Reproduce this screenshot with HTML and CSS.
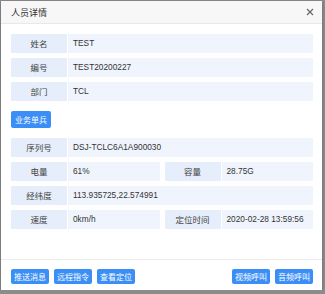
FILE: index.html
```html
<!DOCTYPE html>
<html>
<head>
  <title>人员详情</title>
  <link rel="stylesheet" href="styles.css">
</head>
<body>
  <div class="dialog">
    <div class="dialog-header">
      <span class="title">人员详情</span>
      <svg class="close" width="8" height="8" viewBox="0 0 8 8"><path d="M1 1L7 7M7 1L1 7" stroke="#666" stroke-width="1.2"/></svg>
    </div>

    <div class="dialog-body">
      <div class="row"><div class="label">姓名</div><div class="value">TEST</div></div>
      <div class="row"><div class="label">编号</div><div class="value">TEST20200227</div></div>
      <div class="row"><div class="label">部门</div><div class="value">TCL</div></div>

      <button class="btn btn-single">业务单兵</button>

      <div class="row"><div class="label">序列号</div><div class="value">DSJ-TCLC6A1A900030</div></div>
      <div class="split">
        <div class="row"><div class="label">电量</div><div class="value">61%</div></div>
        <div class="row"><div class="label">容量</div><div class="value">28.75G</div></div>
      </div>
      <div class="row"><div class="label">经纬度</div><div class="value">113.935725,22.574991</div></div>
      <div class="split">
        <div class="row"><div class="label">速度</div><div class="value">0km/h</div></div>
        <div class="row"><div class="label">定位时间</div><div class="value">2020-02-28 13:59:56</div></div>
      </div>
    </div>

    <div class="dialog-footer">
      <div class="group">
        <button class="btn">推送消息</button>
        <button class="btn">远程指令</button>
        <button class="btn">查看定位</button>
      </div>
      <div class="group">
        <button class="btn">视频呼叫</button>
        <button class="btn">音频呼叫</button>
      </div>
    </div>
  </div>
</body>
</html>
```

FILE: styles.css
```css
body { margin: 0; background: #8c8c8c; font-family: "Noto Sans CJK SC", "Liberation Sans", sans-serif; font-size: 10px; color: #333; }
.dialog { margin: 1px 0 0 1px; width: 321px; height: 289px; background: #fff; display: flex; flex-direction: column; box-shadow: 0 1px 3px rgba(0,0,0,0.3); }
.dialog-header { height: 22px; background: #f7f7f7; border-bottom: 1px solid #e8e8e8; display: flex; align-items: center; justify-content: space-between; padding: 0 8px 0 10px; }
.title { font-size: 9px; color: #333; }
.close { display: block; }
.dialog-body { flex: 1; padding: 10px 9px 0 10px; }
.row { display: flex; gap: 1px; height: 19px; margin-bottom: 5px; line-height: 19px; }
.label { width: 56px; flex: none; background: #e6eefb; text-align: center; font-size: 8.5px; color: #444; }
.value { flex: 1; background: #f0f5fd; padding-left: 5px; font-size: 8.3px; font-family: "Liberation Sans", sans-serif; white-space: nowrap; overflow: hidden; }
.split { display: flex; gap: 5px; }
.split .row { flex: 1; }
.btn { border: none; border-radius: 2px; background: #3a8ef6; color: #fff; font-family: "Noto Sans CJK SC", sans-serif; font-size: 8px; padding: 0; width: 38px; height: 15px; line-height: 15px; cursor: pointer; }
.btn-single { width: 40px; height: 17px; margin: 10px 0 10px; display: block; }
.dialog-footer { border-top: 1px solid #ececec; display: flex; justify-content: space-between; padding: 9px 9px 6px 10px; }
.group { display: flex; gap: 5px; }
```
